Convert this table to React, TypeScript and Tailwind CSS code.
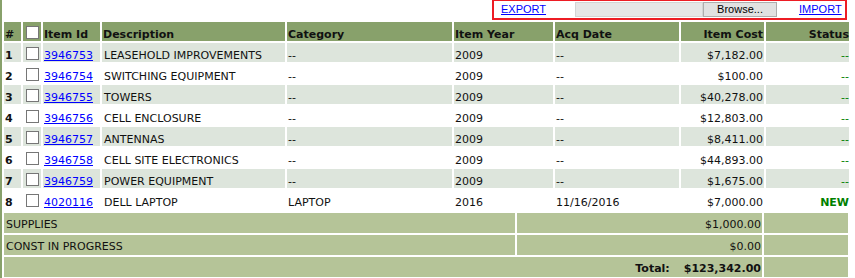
const items = [
  { n: 1, id: '3946753', desc: 'LEASEHOLD IMPROVEMENTS', cat: '--', year: '2009', acq: '--', cost: '$7,182.00', status: '--' },
  { n: 2, id: '3946754', desc: 'SWITCHING EQUIPMENT', cat: '--', year: '2009', acq: '--', cost: '$100.00', status: '--' },
  { n: 3, id: '3946755', desc: 'TOWERS', cat: '--', year: '2009', acq: '--', cost: '$40,278.00', status: '--' },
  { n: 4, id: '3946756', desc: 'CELL ENCLOSURE', cat: '--', year: '2009', acq: '--', cost: '$12,803.00', status: '--' },
  { n: 5, id: '3946757', desc: 'ANTENNAS', cat: '--', year: '2009', acq: '--', cost: '$8,411.00', status: '--' },
  { n: 6, id: '3946758', desc: 'CELL SITE ELECTRONICS', cat: '--', year: '2009', acq: '--', cost: '$44,893.00', status: '--' },
  { n: 7, id: '3946759', desc: 'POWER EQUIPMENT', cat: '--', year: '2009', acq: '--', cost: '$1,675.00', status: '--' },
  { n: 8, id: '4020116', desc: 'DELL LAPTOP', cat: 'LAPTOP', year: '2016', acq: '11/16/2016', cost: '$7,000.00', status: 'NEW' },
];

// shared cell classes: text sits a little low in the 19px rows
const cell = 'p-0 pt-[6px] align-top leading-[13px]';
const foot = 'p-0 pt-[5px] align-top leading-[13px]';

function Box() {
  return (
    <input
      type="checkbox"
      readOnly
      className="appearance-none block w-[13px] h-[13px] ml-[3px] border border-[#767676] bg-white m-0"
    />
  );
}

export default function App() {
  return (
    <div className="w-[855px] h-[278px] overflow-hidden bg-white border-l-2 border-[#88a16b] text-[11px] text-[#111] font-['DejaVu_Sans',sans-serif]">
      <div className="h-[20px] flex justify-end pr-[8px]">
        <div className="w-[355px] h-[21px] -mt-[1px] border-2 border-[#ed1c24] flex items-center font-['Liberation_Sans',Arial,sans-serif] text-[11px]">
          <a href="#" className="ml-[7px] text-[#0000ff] underline">EXPORT</a>
          <div className="ml-[29px] w-[128px] h-[15px] bg-[#e6e6e6] border border-[#d4d4d4]" />
          <button className="w-[74px] h-[15px] bg-[#e1e1e1] border border-[#adadad] text-[11px] leading-[13px] text-black">Browse...</button>
          <a href="#" className="ml-[22px] text-[#0000ff] underline">IMPORT</a>
        </div>
      </div>

      <table className="table-fixed w-[849px] border-separate border-spacing-[2px]">
        <thead>
          <tr className="h-[19px] bg-[#88a16b] font-bold">
            <th className={`w-[17px] ${cell} pl-[1px] text-left`}>#</th>
            <th className="w-[18px] p-0 pt-[2px]"><Box /></th>
            <th className={`w-[57px] ${cell} pl-[1px] text-left`}>Item Id</th>
            <th className={`w-[183px] ${cell} pl-[1px] text-left`}>Description</th>
            <th className={`w-[165px] ${cell} pl-[1px] text-left`}>Category</th>
            <th className={`w-[99px] ${cell} pl-[1px] text-left`}>Item Year</th>
            <th className={`w-[124px] ${cell} pl-[1px] text-left`}>Acq Date</th>
            <th className={`w-[83px] ${cell} pr-[1px] text-right`}>Item Cost</th>
            <th className={`w-[83px] ${cell} text-right`}>Status</th>
          </tr>
        </thead>
        <tbody>
          {items.map(it => (
            <tr key={it.n} className={`h-[19px] ${it.n % 2 ? 'bg-[#dde5dc]' : 'bg-white'}`}>
              <td className={`${cell} pl-[1px] font-bold`}>{it.n}</td>
              <td className="p-0 pt-[2px]"><Box /></td>
              <td className={`${cell} pl-[1px]`}><a href="#" className="text-[#0000ff] underline">{it.id}</a></td>
              <td className={`${cell} pl-[2px]`}>{it.desc}</td>
              <td className={`${cell} pl-[1px]`}>{it.cat}</td>
              <td className={`${cell} pl-[1px]`}>{it.year}</td>
              <td className={`${cell} pl-[1px]`}>{it.acq}</td>
              <td className={`${cell} pr-[1px] text-right`}>{it.cost}</td>
              <td className={`${cell} text-right text-[#008000] ${it.status === 'NEW' ? 'font-bold' : ''}`}>{it.status}</td>
            </tr>
          ))}
        </tbody>
      </table>

      <table className="table-fixed w-[848px] border-separate border-spacing-[2px]">
        <tbody>
          <tr className="h-[20px] bg-[#b5c498]">
            <td className={`w-[511px] ${foot} pl-[2px]`}>SUPPLIES</td>
            <td className={`w-[245px] ${foot} pr-[1px] text-right`}>$1,000.00</td>
            <td className="w-[84px] p-0" />
          </tr>
          <tr className="h-[20px] bg-[#b5c498]">
            <td className={`${foot} pl-[2px]`}>CONST IN PROGRESS</td>
            <td className={`${foot} pr-[1px] text-right`}>$0.00</td>
            <td className="p-0" />
          </tr>
          <tr className="h-[20px] bg-[#b5c498] font-bold">
            <td colSpan={2} className={`${foot} pr-[1px]`}>
              <div className="flex justify-end gap-[14px]">
                <span>Total:</span>
                <span>$123,342.00</span>
              </div>
            </td>
            <td className="p-0" />
          </tr>
        </tbody>
      </table>
    </div>
  );
}
